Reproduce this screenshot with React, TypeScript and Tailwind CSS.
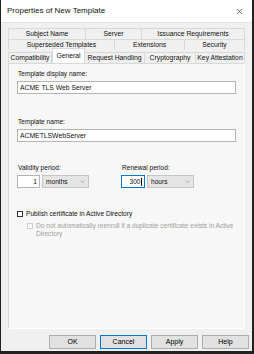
import { X } from 'lucide-react';

const font = { fontFamily: '"Liberation Sans", Arial, sans-serif' };

function TabCell({ label, w, selected }: { label: string; w: number; selected?: boolean }) {
  return (
    <div
      className={
        selected
          ? 'flex items-center justify-center bg-white border-x border-t border-[#d9d9d9] h-[15px] -mt-[2px] relative z-10'
          : 'flex items-center justify-center border-r border-t border-[#d9d9d9] h-[11px] first:border-l'
      }
      style={{ width: w }}
    >
      {label}
    </div>
  );
}

function Chevron() {
  return (
    <svg width="5" height="3" viewBox="0 0 5 3" className="ml-auto">
      <path d="M0.5 0.5 L2.5 2.5 L4.5 0.5" stroke="#9a9a9a" fill="none" strokeWidth="0.8" />
    </svg>
  );
}

function Btn({ label, focused }: { label: string; focused?: boolean }) {
  return (
    <button
      className={
        'w-[47px] h-[14px] bg-[#e1e1e1] flex items-center justify-center text-[7px] text-black border ' +
        (focused ? 'border-[#0078d7]' : 'border-[#adadad]')
      }
    >
      {label}
    </button>
  );
}

export default function App() {
  return (
    <div className="w-[254px] h-[354px] bg-[#222]" style={font}>
      <div className="w-[251px] h-[351px] ml-[1px] bg-[#f0f0f0] flex flex-col text-[6.6px] text-[#111]">
        <header className="h-[23px] bg-white flex items-center pl-[6px] pr-[8px] border-b border-[#e5e5e5]">
          <span className="text-[8px]">Properties of New Template</span>
          <X className="ml-auto text-black" size={9} strokeWidth={1.4} />
        </header>

        <div className="px-[7px] pt-[5px] text-[6.8px]">
          <div className="flex">
            <TabCell label="Subject Name" w={78} />
            <TabCell label="Server" w={56} />
            <TabCell label="Issuance Requirements" w={103} />
          </div>
          <div className="flex">
            <TabCell label="Superseded Templates" w={107} />
            <TabCell label="Extensions" w={70} />
            <TabCell label="Security" w={60} />
          </div>
          <div className="flex items-end h-[13px]">
            <TabCell label="Compatibility" w={44} />
            <TabCell label="General" w={33} selected />
            <TabCell label="Request Handling" w={60} />
            <TabCell label="Cryptography" w={51} />
            <TabCell label="Key Attestation" w={49} />
          </div>
        </div>

        <div className="mx-[7px] h-[266px] bg-[#f7f7f7] border border-[#d9d9d9] border-r-white border-b-white flex flex-col px-[8px] pt-[5px] leading-[10px]">
          <label className="ml-[1px]">Template display name:</label>
          <div className="mt-[2px] h-[13px] bg-white border border-[#b5b5b5] flex items-center px-[2px] text-[6.8px]">
            ACME TLS Web Server
          </div>

          <label className="mt-[23px] ml-[1px]">Template name:</label>
          <div className="mt-[2px] h-[13px] bg-white border border-[#b5b5b5] flex items-center px-[2px] text-[6.8px]">
            ACMETLSWebServer
          </div>

          <div className="flex mt-[21px]">
            <div className="w-[104px] flex flex-col">
              <label className="ml-[1px]">Validity period:</label>
              <div className="flex mt-[2px] gap-[2px]">
                <div className="w-[23px] h-[13px] bg-white border border-[#b5b5b5] flex items-center justify-end px-[2px]">
                  1
                </div>
                <div className="w-[47px] h-[13px] bg-[#e5e5e5] border border-[#c5c5c5] flex items-center px-[3px]">
                  months
                  <Chevron />
                </div>
              </div>
            </div>
            <div className="flex flex-col">
              <label className="ml-[1px]">Renewal period:</label>
              <div className="flex mt-[2px] gap-[2px]">
                <div className="w-[24px] h-[13px] bg-white border border-[#0078d7] flex items-center justify-end px-[2px]">
                  300<span className="w-px h-[8px] bg-black ml-[0.5px]" />
                </div>
                <div className="w-[47px] h-[13px] bg-[#e5e5e5] border border-[#c5c5c5] flex items-center px-[3px]">
                  hours
                  <Chevron />
                </div>
              </div>
            </div>
          </div>

          <div className="flex items-center mt-[21px] gap-[3px]">
            <span className="w-[6px] h-[6px] border border-[#333] bg-white" />
            <span>Publish certificate in Active Directory</span>
          </div>
          <div className="flex items-start mt-[3px] pl-[10px] gap-[3px] text-[#a0a0a0] leading-[8px]">
            <span className="w-[6px] h-[6px] border border-[#cfcfcf] bg-white mt-[1px] shrink-0" />
            <span>Do not automatically reenroll if a duplicate certificate exists in Active Directory</span>
          </div>
        </div>

        <div className="flex justify-end gap-[4px] pr-[3px] mt-[6px]">
          <Btn label="OK" />
          <Btn label="Cancel" focused />
          <Btn label="Apply" />
          <Btn label="Help" />
        </div>
      </div>
    </div>
  );
}
